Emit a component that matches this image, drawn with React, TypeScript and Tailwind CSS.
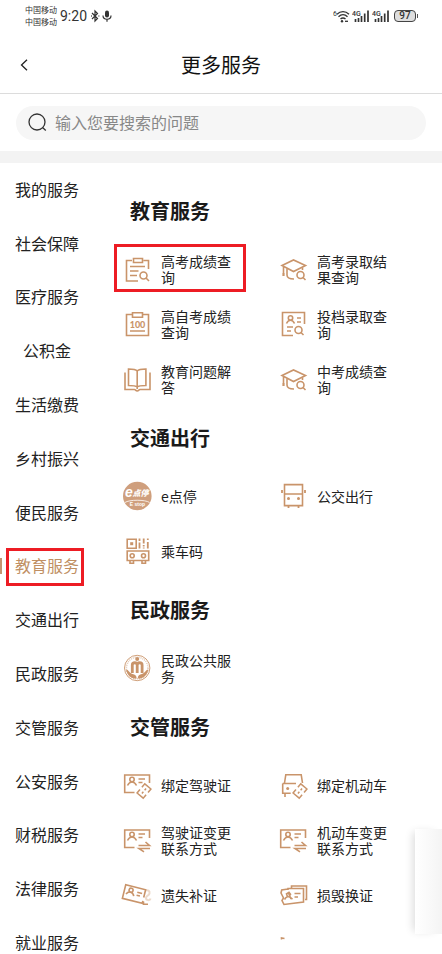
import React from "react";

type IconProps = { children: React.ReactNode };

function Icon({ children }: IconProps) {
  return (
    <svg
      viewBox="0 0 28 28"
      className="h-7 w-7 shrink-0 overflow-visible text-[#c9946a]"
      fill="none"
      stroke="currentColor"
      strokeWidth="1.6"
      aria-hidden="true"
    >
      {children}
    </svg>
  );
}

function Person() {
  return (
    <>
      <circle cx="9" cy="8.500" r="2.200" />
      <path d="M4.500 14.500C5.500 12.500 7 11 9 11s3.500 1.500 4.500 3.500" />
    </>
  );
}

function LinkTag() {
  return (
    <g transform="rotate(40 21 20)" strokeWidth="1.500">
      <path d="M17 18.500V14h8v4.500M17 21.500V26h8v-4.500" />
      <path d="M21 16.800v2.200M21 21v2.200" />
    </g>
  );
}

function CardFrame() {
  return (
    <>
      <path d="M11.500 21.500H1.700V4h24.800v8" />
      <Person />
      <path d="M15.500 8h6.500M15.500 11.500h4" />
    </>
  );
}

const scoreIcon = (
  <Icon>
    <path d="M9 5.500H3.500V26H15M20.500 5.500h5V14M10.500 3.500h9v4h-9zM7 11.500h15M7 16h8.500M7 20.500h7" />
    <circle cx="20.500" cy="20.500" r="3.500" />
    <path d="m23 23 3 3" />
  </Icon>
);

const capIcon = (
  <Icon>
    <path d="m3 10.500 11.500-5.500 12 5.500-12 6zM4.500 11.500V18" />
    <path d="M4.500 18v3" strokeWidth="2.200" />
    <path d="M8 13.500V20c0 2.500 2.500 4 7 4M23.500 12.500V15" />
    <circle cx="21.500" cy="20" r="3.500" />
    <path d="m24 22.500 2.500 2.500" />
  </Icon>
);

const fileIcon = (
  <Icon>
    <path d="M14 25.500H3.500v-23h22V14" />
    <circle cx="11.500" cy="8" r="2.200" />
    <path d="M7.500 13.500c.8-2 2.200-3.300 4-3.300s3.200 1.300 4 3.300M18 8h4M18 12h4M8 17h6M8 21h4" />
    <circle cx="19.500" cy="20" r="3.500" />
    <path d="m22 22.500 2.500 2.500" />
  </Icon>
);

const hundredIcon = (
  <Icon>
    <path d="M9.500 4.500h-6v21h22v-21h-6M9.500 2.700h10v4.500h-10zM7 21h15" />
    <text
      x="14.500"
      y="17.500"
      textAnchor="middle"
      fill="currentColor"
      stroke="none"
      className="font-['Lato',sans-serif] text-[9px] font-black"
    >
      100
    </text>
  </Icon>
);

const bookIcon = (
  <Icon>
    <path d="M14.200 6c-1.500-1.800-4-2-8.700-2v16.500c4.700 0 7.200 0 8.700 1.500zM14.200 6c1.500-1.800 4-2 8.700-2v16.500c-4.700 0-7.200 0-8.700 1.500z" />
    <path d="M2 7.500v17h9.500c1 0 1.200 1.500 2.700 1.500s1.700-1.500 2.700-1.500H27v-17" />
  </Icon>
);

const parkingIcon = (
  <Icon>
    <circle cx="14.300" cy="14" r="14.300" fill="#cf9f7d" stroke="none" />
    <path d="M2 20.500c4-3 20.500-3 24.500 0" stroke="#fff" strokeWidth="0.800" />
    <text
      x="2"
      y="14.800"
      fill="#fff"
      stroke="none"
      className="font-['Liberation_Sans',sans-serif] text-[14px] font-bold italic"
    >
      e
    </text>
    <text
      x="9.500"
      y="14.200"
      fill="#fff"
      stroke="none"
      className="font-['Noto_Sans_CJK_SC',sans-serif] text-[8px] font-black italic"
    >
      点停
    </text>
    <text
      x="14.500"
      y="24"
      textAnchor="middle"
      fill="#fff"
      stroke="none"
      className="font-['Liberation_Sans',sans-serif] text-[5px] font-bold"
    >
      E stop
    </text>
  </Icon>
);

const busIcon = (
  <Icon>
    <path d="M5.500 2.600h18v21h-18zM5.500 12h18" />
    <path d="M3 8v3M26 8v3M9.500 23.500V26M19.500 23.500V26" strokeWidth="1.800" />
    <circle cx="9.500" cy="16.500" r="1.500" fill="currentColor" stroke="none" />
    <circle cx="19.500" cy="16.500" r="1.500" fill="currentColor" stroke="none" />
  </Icon>
);

const rideCodeIcon = (
  <Icon>
    <path d="M4.200 2.200h9v9h-9z" />
    <path d="M7.200 5.200h3v3h-3z" fill="currentColor" stroke="none" />
    <path
      d="M16.500 1.500V4M16.500 5.500v6M20.700 1.500v5M20.700 8v1.500M24.800 1.500V3M24.800 5v6.500M20.700 10.500v1"
      strokeWidth="1.800"
    />
    <path d="M4.200 14h21.500v9.500H4.200z" />
    <circle cx="9.200" cy="18.700" r="2" />
    <circle cx="20.500" cy="18.700" r="2" />
    <path d="M7 23.500v2.800h3.500v-2.800M19 23.500v2.800h3.500v-2.800" />
  </Icon>
);

const civilIcon = (
  <Icon>
    <circle cx="14.200" cy="14" r="12.700" strokeWidth="0.900" />
    <circle cx="14.200" cy="14" r="10.800" strokeWidth="1.500" strokeDasharray="1 1" opacity="0.500" />
    <circle cx="14.200" cy="5" r="2" fill="currentColor" stroke="none" />
    <path d="M9.300 19V11c0-3 4.900-3 4.900 0v8M14.200 11c0-3 4.900-3 4.900 0v8" strokeWidth="2.800" />
    <path
      d="M3 15.500c2.500 0 3.500 3.500 6.500 4.500 2.500.5 4 1.500 4.200 4.500-5 .5-9.500-3-10.700-9zM25.400 15.500c-2.500 0-3.500 3.500-6.500 4.500-2.500.5-4 1.500-4.200 4.500 5 .5 9.500-3 10.700-9z"
      fill="currentColor"
      stroke="none"
    />
  </Icon>
);

const bindLicenseIcon = (
  <Icon>
    <CardFrame />
    <LinkTag />
  </Icon>
);

const bindCarIcon = (
  <Icon>
    <path d="M5.500 12 6.800 3.700h15.400L23.500 12M3.700 12.500H17M3.700 12.500v9.700h8M6 22.200V26" />
    <circle cx="8.700" cy="17.500" r="1.500" fill="currentColor" stroke="none" />
    <LinkTag />
  </Icon>
);

const changeIcon = (
  <Icon>
    <CardFrame />
    <path d="M15.500 19.500h11l-4-3.500M27 22.500H16l5 3.300" />
  </Icon>
);

const lostIcon = (
  <Icon>
    <g transform="rotate(14 11 12)">
      <path d="M21.500 17.500V20H1V6h20.500v8" />
      <circle cx="7.500" cy="10" r="2" />
      <path d="M3.500 15c.8-1.800 2.200-3 4-3s3.200 1.200 4 3M14 10.500h5M14 13.500h3.500" />
    </g>
    <path d="M20.500 20.500v2.800h4.500" />
    <path
      d="M22 9.500c3-1 5 .5 4.500 3s-3.500 2-3.500 4.500 4 3 4.500.5"
      opacity="0.350"
      strokeWidth="2"
    />
  </Icon>
);

const damagedIcon = (
  <Icon>
    <path d="M12.500 7V5h15v13.500H26M9 9V7.500h15.500V21L5 23.500l-2-4 1.500-2.500L2 12l.7-3L9 8" />
    <path d="M5.500 18.500c.8-1.500 1.500-2.500 3-2.700l-1-3 2.500-1.500 1.500 2-1.500 2.200 3.500 2.700M9.500 12l2.500 6M15.500 12.500h6M15.500 16h3.500" />
  </Icon>
);

const partialIcon = (
  <Icon>
    <path d="M2.500 2.500V1l3 .5" />
  </Icon>
);

type Service = { label: string; icon: React.ReactNode; marked?: boolean };
type Section = { title: string; rows: Service[] };

const sections: Section[] = [
  {
    title: "教育服务",
    rows: [
      { label: "高考成绩查询", icon: scoreIcon, marked: true },
      { label: "高考录取结果查询", icon: capIcon },
      { label: "高自考成绩查询", icon: hundredIcon },
      { label: "投档录取查询", icon: fileIcon },
      { label: "教育问题解答", icon: bookIcon },
      { label: "中考成绩查询", icon: capIcon },
    ],
  },
  {
    title: "交通出行",
    rows: [
      { label: "e点停", icon: parkingIcon },
      { label: "公交出行", icon: busIcon },
      { label: "乘车码", icon: rideCodeIcon },
    ],
  },
  { title: "民政服务", rows: [{ label: "民政公共服务", icon: civilIcon }] },
  {
    title: "交管服务",
    rows: [
      { label: "绑定驾驶证", icon: bindLicenseIcon },
      { label: "绑定机动车", icon: bindCarIcon },
      { label: "驾驶证变更联系方式", icon: changeIcon },
      { label: "机动车变更联系方式", icon: changeIcon },
      { label: "遗失补证", icon: lostIcon },
      { label: "损毁换证", icon: damagedIcon },
    ],
  },
];

const categories = [
  "我的服务",
  "社会保障",
  "医疗服务",
  "公积金",
  "生活缴费",
  "乡村振兴",
  "便民服务",
  "教育服务",
  "交通出行",
  "民政服务",
  "交管服务",
  "公安服务",
  "财税服务",
  "法律服务",
  "就业服务",
];

function Signal() {
  return (
    <svg viewBox="0 0 18 14" className="h-3.5 w-[18px]" fill="none" stroke="#333" aria-hidden="true">
      <text
        x="0"
        y="6.500"
        fill="#333"
        stroke="none"
        className="font-['Roboto',sans-serif] text-[7px] font-medium"
      >
        4G
      </text>
      <path d="M3.500 10v3M6.500 9v4M9.500 7v6M12.700 4.500V13M16 1.500V13" strokeWidth="1.700" />
    </svg>
  );
}

function StatusBar() {
  return (
    <div className="flex h-8 items-center justify-between pr-6 pl-[25px] text-[#333]">
      <div className="flex items-center">
        <div className="text-[8px] leading-3">
          <div>中国移动</div>
          <div>中国移动</div>
        </div>
        <span className="ml-[3px] font-['Roboto',sans-serif] text-sm">9:20</span>
        <svg viewBox="0 0 10 14" className="ml-[3px] h-3.5 w-2.5" fill="none" stroke="#333" strokeWidth="1.200" aria-hidden="true">
          <path d="m2 4 5.500 5.500L5 12V2l2.500 2.500L2 10" />
          <path d="M1 7h.8M8.500 7h.8" strokeWidth="1.400" />
        </svg>
        <svg viewBox="0 0 10 14" className="ml-0.5 h-3.5 w-2.5" fill="none" stroke="#333" strokeWidth="1.200" aria-hidden="true">
          <rect x="3" y="1.500" width="4" height="7" rx="2" fill="#333" stroke="none" />
          <path d="M1 6.500c0 5 8 5 8 0M5 10.200v2.500" />
        </svg>
      </div>
      <div className="flex items-center gap-0.5">
        <svg viewBox="0 0 17 14" className="h-3.5 w-[17px]" fill="none" stroke="#333" aria-hidden="true">
          <text x="0" y="6.500" fill="#333" stroke="none" className="font-['Roboto',sans-serif] text-[7px]">
            6
          </text>
          <path d="M4 5.200c3.500-3.500 8.500-3.500 12 0M5.500 7.700c2.700-2.500 6.300-2.500 9 0M7.500 10c1.600-1.400 3.400-1.400 5 0" strokeWidth="1.400" />
          <circle cx="9" cy="12.300" r="1.200" fill="#333" stroke="none" />
          <path d="M12 12.300h3" strokeWidth="1.300" />
        </svg>
        <Signal />
        <Signal />
        <div className="ml-0.5 flex items-center">
          <div className="flex h-3 w-[22px] items-center justify-center rounded-[4px] border border-[#444] bg-[#dedede] font-['Roboto',sans-serif] text-[10px] leading-none font-medium">
            97
          </div>
          <div className="ml-px h-1 w-px bg-[#555]" />
        </div>
      </div>
    </div>
  );
}

function ServiceItem({ label, icon, marked }: Service) {
  return (
    <button type="button" className="relative flex h-[55px] items-center gap-2.5 text-left">
      {icon}
      <span className="w-[72px] text-sm leading-4 text-[#222]">{label}</span>
      {marked && (
        <span className="absolute top-[3px] -left-[9px] h-12 w-[132px] border-3 border-[#ed1c24]" />
      )}
    </button>
  );
}

export default function App() {
  return (
    <div className="relative flex h-screen flex-col overflow-hidden bg-white font-['Noto_Sans_CJK_SC',sans-serif] text-[#222]">
      <StatusBar />
      <header className="mt-1 grid h-[58px] shrink-0 grid-cols-[48px_1fr_48px] items-center border-b border-[#dcdcdc]">
        <button type="button" aria-label="返回" className="flex h-10 items-center pl-5">
          <svg viewBox="0 0 8 12" className="h-3 w-2" fill="none" stroke="#222" strokeWidth="1.300" aria-hidden="true">
            <path d="M7 .7 1.500 6 7 11.300" />
          </svg>
        </button>
        <h1 className="text-center text-xl text-[#111]">更多服务</h1>
      </header>
      <div className="shrink-0 px-4 pt-3 pb-[11px]">
        <label className="flex h-[34px] items-center gap-2 rounded-full bg-[#f6f6f6] pb-0.5 pl-3">
          <svg viewBox="0 0 19 19" className="h-[19px] w-[19px] shrink-0" fill="none" stroke="#333" strokeWidth="1.300" aria-hidden="true">
            <circle cx="9" cy="9" r="8" />
            <path d="m14.500 14.500 3.300 3" />
          </svg>
          <input
            type="search"
            aria-label="搜索"
            placeholder="输入您要搜索的问题"
            className="min-w-0 flex-1 bg-transparent text-base outline-none placeholder:text-[#888]"
          />
        </label>
      </div>
      <div className="h-3 shrink-0 bg-[#f3f3f3]" />
      <div className="flex min-h-0 flex-1 items-start">
        <nav className="flex h-[807px] w-[94px] shrink-0 flex-col">
          {categories.map((name) => {
            const active = name === "教育服务";
            return (
              <a
                key={name}
                href="#"
                className={
                  active
                    ? "relative flex flex-1 items-center justify-center pb-0.5 text-base text-[#c08f63]"
                    : "flex flex-1 items-center justify-center pb-0.5 text-base text-[#222]"
                }
              >
                {active && (
                  <>
                    <span className="absolute top-[18px] left-0 h-4 w-0.5 bg-[#c39672]" />
                    <span className="absolute top-2 left-1.5 h-[38px] w-[78px] border-3 border-[#ed1c24]" />
                  </>
                )}
                {name}
              </a>
            );
          })}
        </nav>
        <main className="min-w-0 flex-1 pt-[17px] pr-[7px] pl-[29px]">
          {sections.map((section) => (
            <section key={section.title} className="pb-px">
              <h2 className="flex h-[61px] items-center pl-[7px] text-xl font-bold text-[#1a1a1a]">{section.title}</h2>
              <div className="grid grid-cols-2">
                {section.rows.map((row) => (
                  <ServiceItem key={row.label} {...row} />
                ))}
              </div>
            </section>
          ))}
          <div className="grid grid-cols-2">
            <div className="col-start-2 flex h-[55px] items-center">{partialIcon}</div>
          </div>
        </main>
      </div>
      <div className="absolute right-0 bottom-5 h-[105px] w-[27px] bg-linear-to-r from-white to-[#f4f4f4] shadow-[-5px_0_8px_-3px_rgba(0,0,0,0.14)]" />
    </div>
  );
}
